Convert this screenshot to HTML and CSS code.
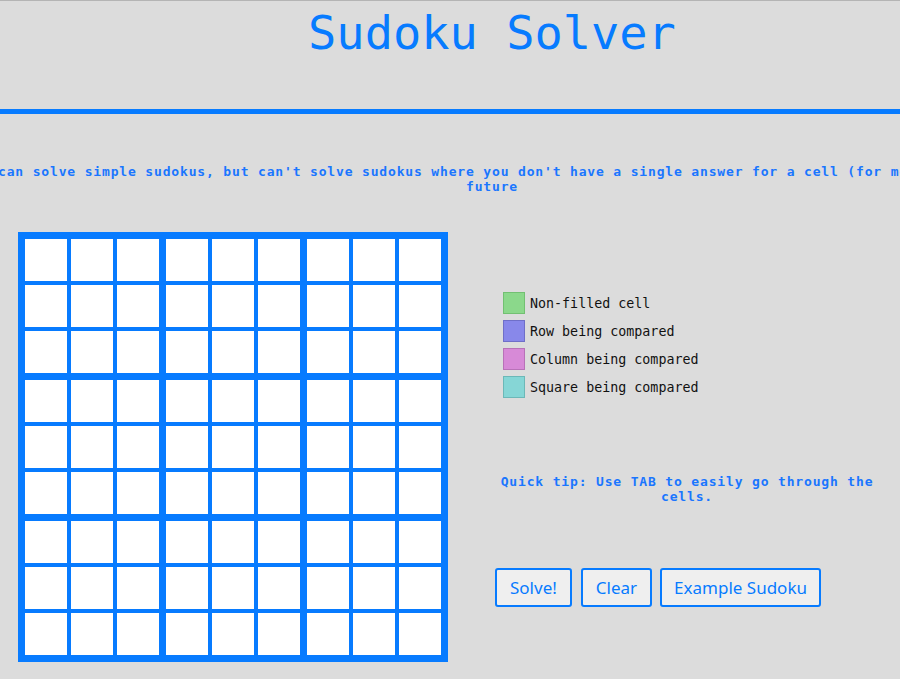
FILE: index.html
```html
<!DOCTYPE html>
<html>
<head>
<meta charset="utf-8">
<title>Sudoku Solver</title>
<link rel="stylesheet" href="styles.css">
</head>
<body>
<div class="page">
  <header class="header">
    <h1 class="title">Sudoku Solver</h1>
  </header>
  <p class="intro">I can solve simple sudokus, but can't solve sudokus where you don't have a single answer for a cell (for more, see the future</p>
  <main class="main">
    <div class="board">
      <div class="box"><div class="cell"></div><div class="cell"></div><div class="cell"></div><div class="cell"></div><div class="cell"></div><div class="cell"></div><div class="cell"></div><div class="cell"></div><div class="cell"></div></div>
      <div class="box"><div class="cell"></div><div class="cell"></div><div class="cell"></div><div class="cell"></div><div class="cell"></div><div class="cell"></div><div class="cell"></div><div class="cell"></div><div class="cell"></div></div>
      <div class="box"><div class="cell"></div><div class="cell"></div><div class="cell"></div><div class="cell"></div><div class="cell"></div><div class="cell"></div><div class="cell"></div><div class="cell"></div><div class="cell"></div></div>
      <div class="box"><div class="cell"></div><div class="cell"></div><div class="cell"></div><div class="cell"></div><div class="cell"></div><div class="cell"></div><div class="cell"></div><div class="cell"></div><div class="cell"></div></div>
      <div class="box"><div class="cell"></div><div class="cell"></div><div class="cell"></div><div class="cell"></div><div class="cell"></div><div class="cell"></div><div class="cell"></div><div class="cell"></div><div class="cell"></div></div>
      <div class="box"><div class="cell"></div><div class="cell"></div><div class="cell"></div><div class="cell"></div><div class="cell"></div><div class="cell"></div><div class="cell"></div><div class="cell"></div><div class="cell"></div></div>
      <div class="box"><div class="cell"></div><div class="cell"></div><div class="cell"></div><div class="cell"></div><div class="cell"></div><div class="cell"></div><div class="cell"></div><div class="cell"></div><div class="cell"></div></div>
      <div class="box"><div class="cell"></div><div class="cell"></div><div class="cell"></div><div class="cell"></div><div class="cell"></div><div class="cell"></div><div class="cell"></div><div class="cell"></div><div class="cell"></div></div>
      <div class="box"><div class="cell"></div><div class="cell"></div><div class="cell"></div><div class="cell"></div><div class="cell"></div><div class="cell"></div><div class="cell"></div><div class="cell"></div><div class="cell"></div></div>
    </div>
    <aside class="side">
      <ul class="legend">
        <li class="legend-item"><span class="swatch swatch-green"></span>Non-filled cell</li>
        <li class="legend-item"><span class="swatch swatch-blue"></span>Row being compared</li>
        <li class="legend-item"><span class="swatch swatch-pink"></span>Column being compared</li>
        <li class="legend-item"><span class="swatch swatch-teal"></span>Square being compared</li>
      </ul>
      <p class="tip">Quick tip: Use TAB to easily go through the cells.</p>
      <div class="actions">
        <button class="btn">Solve!</button>
        <button class="btn">Clear</button>
        <button class="btn btn-wide">Example Sudoku</button>
      </div>
    </aside>
  </main>
</div>
</body>
</html>
```
FILE: styles.css
```css
html, body {
  margin: 0;
  padding: 0;
  overflow: hidden;
  background: #dcdcdc;
}

body {
  border-top: 1px solid #b4b4b4;
  height: 678px;
}

.page {
  width: 984px;
}

.header {
  padding: 4px 0 49px;
  border-bottom: 5px solid #077bff;
}

.title {
  margin: 0;
  font-family: "DejaVu Sans Mono", monospace;
  font-weight: normal;
  font-size: 47px;
  line-height: 55px;
  color: #077bff;
  text-align: center;
}

.intro {
  margin: 50px -40px 0;
  font-family: "DejaVu Sans Mono", monospace;
  font-weight: bold;
  font-size: 13px;
  letter-spacing: 0.84px;
  color: #1a76ff;
  text-align: center;
}

.main {
  display: flex;
  align-items: flex-start;
  padding-left: 18px;
  margin-top: 38px;
}

.board {
  display: grid;
  grid-template-columns: repeat(3, 134px);
  gap: 7px;
  padding: 7px;
  background: #077bff;
}

.box {
  display: grid;
  grid-template-columns: repeat(3, 42px);
  grid-auto-rows: 42px;
  gap: 4px;
}

.cell {
  background: #ffffff;
}

.side {
  width: 426px;
  margin-left: 26px;
  padding-top: 60px;
}

.legend {
  list-style: none;
  margin: 0;
  padding: 0 0 0 29px;
}

.legend-item {
  display: flex;
  align-items: center;
  gap: 5px;
  height: 22px;
  margin-bottom: 6px;
  font-family: "DejaVu Sans Mono", monospace;
  font-size: 13.33px;
  color: #111111;
}

.swatch {
  width: 20px;
  height: 20px;
  border: 1px solid #9a9a9a;
}

.swatch-green { background: #8bd88b; border-color: #72c072; }
.swatch-blue { background: #8888ea; border-color: #6f6fc8; }
.swatch-pink { background: #d78ad7; border-color: #b872b8; }
.swatch-teal { background: #86d6d6; border-color: #6cb8b8; }

.tip {
  margin: 76px 0 0;
  font-family: "DejaVu Sans Mono", monospace;
  font-weight: bold;
  font-size: 13px;
  letter-spacing: 0.84px;
  color: #1a76ff;
  text-align: center;
}

.actions {
  display: flex;
  gap: 9px;
  margin: 64px 0 0 21px;
}

.btn {
  height: 39px;
  padding: 0 13px;
  border: 2px solid #077bff;
  border-radius: 3px;
  background: #efefef;
  color: #077bff;
  font-family: "Noto Sans", sans-serif;
  font-size: 17px;
  cursor: pointer;
}

.btn-wide {
  padding: 0 12px;
  margin-left: -1px;
}
```
